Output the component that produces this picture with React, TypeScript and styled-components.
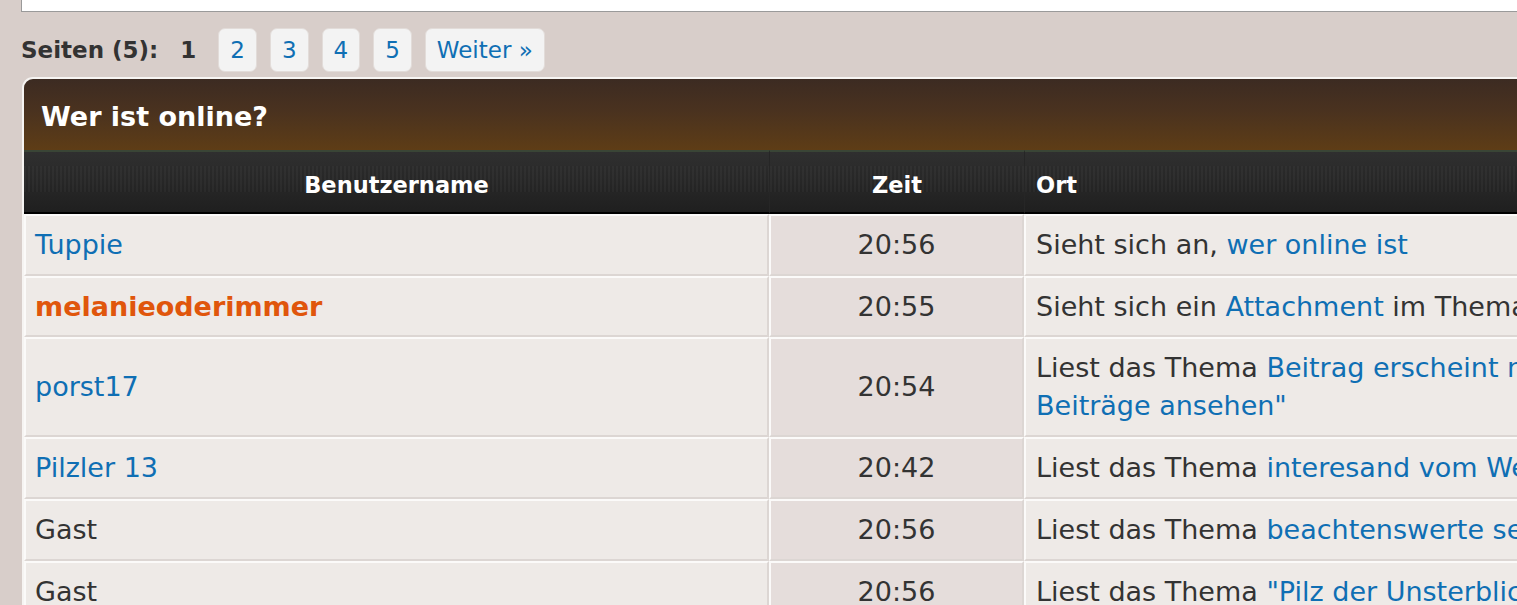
import React from "react";
import styled, { createGlobalStyle } from "styled-components";

const Global = createGlobalStyle`
  html, body { margin: 0; padding: 0; }
  body {
    background: #d8ceca;
    font-family: "DejaVu Sans", Verdana, sans-serif;
    color: #333;
    overflow: hidden;
  }
`;

const Page = styled.div`
  width: 1900px;
  padding-left: 21px;
  box-sizing: border-box;
`;

const TopBox = styled.div`
  height: 11px;
  background: #fff;
  border-left: 1px solid #9a9a9a;
  border-bottom: 1px solid #9a9a9a;
`;

const Pagination = styled.div`
  display: flex;
  align-items: center;
  gap: 13px;
  margin-top: 16px;
  font-size: 23px;
  line-height: 32px;
`;

const PagLabel = styled.span`
  font-weight: bold;
  color: #333;
`;

const PagCurrent = styled.span`
  font-weight: bold;
  color: #333;
  margin: 0 9px;
`;

const PagLink = styled.a`
  display: inline-block;
  padding: 5px 11px;
  border: 1px solid #e2dcd9;
  border-radius: 7px;
  background: #f3f3f3;
  color: #0f6fb4;
  text-decoration: none;
`;

const Panel = styled.div`
  margin-top: 5px;
  margin-left: 1px;
  border: 2px solid #f6f4f2;
  border-right: none;
  border-top-left-radius: 11px;
  overflow: hidden;
`;

const Table = styled.table`
  border-collapse: separate;
  border-spacing: 0;
  table-layout: fixed;
  width: 1800px;
  font-size: 27px;
  line-height: 37.8px;
`;

const Title = styled.th`
  text-align: left;
  padding: 19px 17px 14px;
  background: linear-gradient(to bottom, #3c2b22 0%, #4a321f 45%, #5e3d16 100%);
  color: #fff;
  font-weight: bold;
  font-size: 27px;
`;

const HeadCell = styled.th<{ $align: string }>`
  text-align: ${(p) => p.$align};
  padding: 18px 11px 11px;
  font-size: 22.5px;
  line-height: 31px;
  font-weight: bold;
  color: #fff;
  border-top: 2px solid #3a4536;
  border-bottom: 2px solid #000;
  border-left: 1px solid #262626;
  background:
    repeating-linear-gradient(
      to right,
      rgba(255, 255, 255, 0.025) 0 2px,
      rgba(0, 0, 0, 0.05) 2px 4px
    ) 0 14px / 100% 26px no-repeat,
    linear-gradient(to bottom, #2f2f2f 0%, #2a2a2a 40%, #1f1f1f 100%);
  &:first-child { border-left: none; }
`;

const Cell = styled.td<{ $alt?: boolean; $center?: boolean; $inset?: number }>`
  padding: 10px 9px 10px ${(p) => p.$inset ?? 9}px;
  vertical-align: middle;
  text-align: ${(p) => (p.$center ? "center" : "left")};
  background: ${(p) => (p.$alt ? "#e5dddb" : "#eeeae7")};
  border-top: 2px solid #fbfaf9;
  border-left: 2px solid #fbfaf9;
  border-bottom: 2px solid #dcd6d3;
  border-right: 2px solid #dcd6d3;
  color: #333;
`;

const UserLink = styled.a<{ $mod?: boolean }>`
  color: ${(p) => (p.$mod ? "#e0560c" : "#0f6fb4")};
  font-weight: ${(p) => (p.$mod ? "bold" : "normal")};
  text-decoration: none;
`;

const Link = styled.a`
  color: #0f6fb4;
  text-decoration: none;
`;

type Row = {
  user: string;
  kind: "user" | "mod" | "guest";
  time: string;
  pre: string;
  link: string;
  post?: string;
};

const rows: Row[] = [
  { user: "Tuppie", kind: "user", time: "20:56", pre: "Sieht sich an, ", link: "wer online ist" },
  { user: "melanieoderimmer", kind: "mod", time: "20:55", pre: "Sieht sich ein ", link: "Attachment", post: " im Thema Pilzbestimmung" },
  { user: "porst17", kind: "user", time: "20:54", pre: "Liest das Thema ", link: "Beitrag erscheint nicht unter \"Neue Beiträge ansehen\"" },
  { user: "Pilzler 13", kind: "user", time: "20:42", pre: "Liest das Thema ", link: "interesand vom Wegesrand" },
  { user: "Gast", kind: "guest", time: "20:56", pre: "Liest das Thema ", link: "beachtenswerte seiten" },
  { user: "Gast", kind: "guest", time: "20:56", pre: "Liest das Thema ", link: "\"Pilz der Unsterblichkeit\"" },
];

export default function App() {
  return (
    <>
      <Global />
      <Page>
        <TopBox />
        <Pagination>
          <PagLabel>Seiten (5):</PagLabel>
          <PagCurrent>1</PagCurrent>
          <PagLink href="#">2</PagLink>
          <PagLink href="#">3</PagLink>
          <PagLink href="#">4</PagLink>
          <PagLink href="#">5</PagLink>
          <PagLink href="#">Weiter »</PagLink>
        </Pagination>
        <Panel>
          <Table>
            <colgroup>
              <col style={{ width: 745 }} />
              <col style={{ width: 255 }} />
              <col />
            </colgroup>
            <thead>
              <tr>
                <Title colSpan={3}>Wer ist online?</Title>
              </tr>
              <tr>
                <HeadCell $align="center">Benutzername</HeadCell>
                <HeadCell $align="center">Zeit</HeadCell>
                <HeadCell $align="left">Ort</HeadCell>
              </tr>
            </thead>
            <tbody>
              {rows.map((r, i) => (
                <tr key={i}>
                  <Cell>
                    {r.kind === "guest" ? (
                      r.user
                    ) : (
                      <UserLink href="#" $mod={r.kind === "mod"}>
                        {r.user}
                      </UserLink>
                    )}
                  </Cell>
                  <Cell $alt $center>
                    {r.time}
                  </Cell>
                  <Cell $inset={10}>
                    {r.pre}
                    <Link href="#">{r.link}</Link>
                    {r.post}
                  </Cell>
                </tr>
              ))}
            </tbody>
          </Table>
        </Panel>
      </Page>
    </>
  );
}
